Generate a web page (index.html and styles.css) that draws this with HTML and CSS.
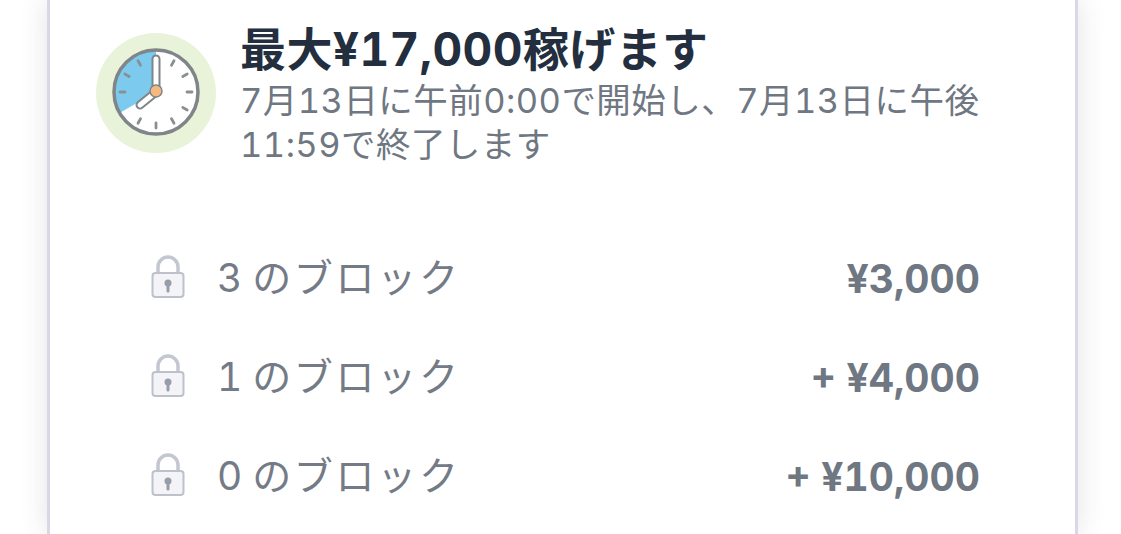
FILE: index.html
```html
<!DOCTYPE html>
<html lang="ja">
<head>
  <meta charset="UTF-8" />
  <title>最大¥17,000稼げます</title>
  <link rel="stylesheet" href="styles.css">
</head>
<body>
  <div class="card">
    <div class="header">
      <svg class="clock" viewBox="0 0 120 120" width="120" height="120">
        <circle cx="60" cy="60" r="60" fill="#e9f3da"/>
        <circle cx="60" cy="59" r="42" fill="#fff"/>
        <path d="M60 59 L60 17 A42 42 0 0 0 23.6 80 Z" fill="#7ccbee"/>
        <circle cx="60" cy="59" r="42" fill="none" stroke="#7f8588" stroke-width="3.500"/>
        <g stroke="#8a8f92" stroke-width="2.800" stroke-linecap="round">
          <path d="M75.500 32.200 L78 27.800"/>
          <path d="M86.800 43.500 L91.200 41"/>
          <path d="M91 59 L96 59"/>
          <path d="M86.800 74.500 L91.200 77"/>
          <path d="M75.500 85.800 L78 90.200"/>
          <path d="M60 90 L60 95"/>
          <path d="M44.500 85.800 L42 90.200"/>
          <path d="M29 59 L24 59"/>
          <path d="M33.200 43.500 L28.800 41"/>
          <path d="M44.500 32.200 L42 27.800"/>
        </g>
        <path d="M60 59 L60 26" stroke="#7f8588" stroke-width="9" stroke-linecap="round"/>
        <path d="M60 59 L60 26" stroke="#fff" stroke-width="5" stroke-linecap="round"/>
        <path d="M60 59 L44 72" stroke="#7f8588" stroke-width="9" stroke-linecap="round"/>
        <path d="M60 59 L44 72" stroke="#fff" stroke-width="5" stroke-linecap="round"/>
        <circle cx="60" cy="58" r="6" fill="#f5b97f" stroke="#7f8588" stroke-width="1.500"/>
      </svg>
      <div class="header-text">
        <h2>最大¥17,000稼げます</h2>
        <p>7月13日に午前0:00で開始し、7月13日に午後<br>11:59で終了します</p>
      </div>
    </div>

    <div class="rows">
      <div class="row">
        <svg class="lock" viewBox="0 0 36 44" width="36" height="44">
          <path d="M7 20 V12 A10 10 0 0 1 27 12 V20" fill="none" stroke="#c3c7d0" stroke-width="3.500"/>
          <rect x="1.500" y="18" width="31" height="24" rx="3" fill="#f3f3f8" stroke="#bcc1cb" stroke-width="2"/>
          <circle cx="17" cy="28" r="3.500" fill="#989ea8"/>
          <path d="M17 28 V36" stroke="#989ea8" stroke-width="3" stroke-linecap="round"/>
        </svg>
        <span class="label">3 のブロック</span>
        <span class="amount">¥3,000</span>
      </div>
      <div class="row">
        <svg class="lock" viewBox="0 0 36 44" width="36" height="44">
          <path d="M7 20 V12 A10 10 0 0 1 27 12 V20" fill="none" stroke="#c3c7d0" stroke-width="3.500"/>
          <rect x="1.500" y="18" width="31" height="24" rx="3" fill="#f3f3f8" stroke="#bcc1cb" stroke-width="2"/>
          <circle cx="17" cy="28" r="3.500" fill="#989ea8"/>
          <path d="M17 28 V36" stroke="#989ea8" stroke-width="3" stroke-linecap="round"/>
        </svg>
        <span class="label">1 のブロック</span>
        <span class="amount">+ ¥4,000</span>
      </div>
      <div class="row">
        <svg class="lock" viewBox="0 0 36 44" width="36" height="44">
          <path d="M7 20 V12 A10 10 0 0 1 27 12 V20" fill="none" stroke="#c3c7d0" stroke-width="3.500"/>
          <rect x="1.500" y="18" width="31" height="24" rx="3" fill="#f3f3f8" stroke="#bcc1cb" stroke-width="2"/>
          <circle cx="17" cy="28" r="3.500" fill="#989ea8"/>
          <path d="M17 28 V36" stroke="#989ea8" stroke-width="3" stroke-linecap="round"/>
        </svg>
        <span class="label">0 のブロック</span>
        <span class="amount">+ ¥10,000</span>
      </div>
    </div>
  </div>
</body>
</html>
```

FILE: styles.css
```css
* {
  box-sizing: border-box;
  font-family: 'Inter', 'Noto Sans CJK JP', sans-serif;
  font-variant-numeric: tabular-nums;
}

html, body {
  height: 100%;
}

body {
  margin: 0;
  background: #fff;
  overflow: hidden;
}

.card {
  width: 1031px;
  height: 534px;
  margin-left: 47px;
  padding: 20px 95px 0 46px;
  background: #fff;
  border-left: 3px solid #d8d8e6;
  border-right: 3px solid #d8d8e6;
  box-shadow: 0 0 26px rgba(60, 60, 80, 0.14);
}

.header {
  display: flex;
  gap: 24px;
}

.clock {
  flex: none;
  margin-top: 13px;
}

h2 {
  margin: 0;
  color: #232f3e;
  font-size: 46px;
  font-weight: 700;
  letter-spacing: 0.4px;
  line-height: 59px;
  white-space: nowrap;
}

.header-text p {
  margin: 0;
  color: #6f7782;
  font-size: 34.5px;
  letter-spacing: 0.45px;
  line-height: 44px;
  white-space: nowrap;
}

.rows {
  margin-top: 60px;
  padding-left: 55px;
}

.row {
  display: flex;
  align-items: center;
  height: 99px;
}

.lock {
  flex: none;
  margin-right: 30px;
}

.label {
  padding-bottom: 4px;
  color: #747b86;
  font-size: 39px;
  letter-spacing: 2.7px;
  word-spacing: -6px;
}

.amount {
  margin-left: auto;
  padding-top: 4px;
  color: #6f7782;
  font-size: 39px;
  font-weight: 700;
}
```
